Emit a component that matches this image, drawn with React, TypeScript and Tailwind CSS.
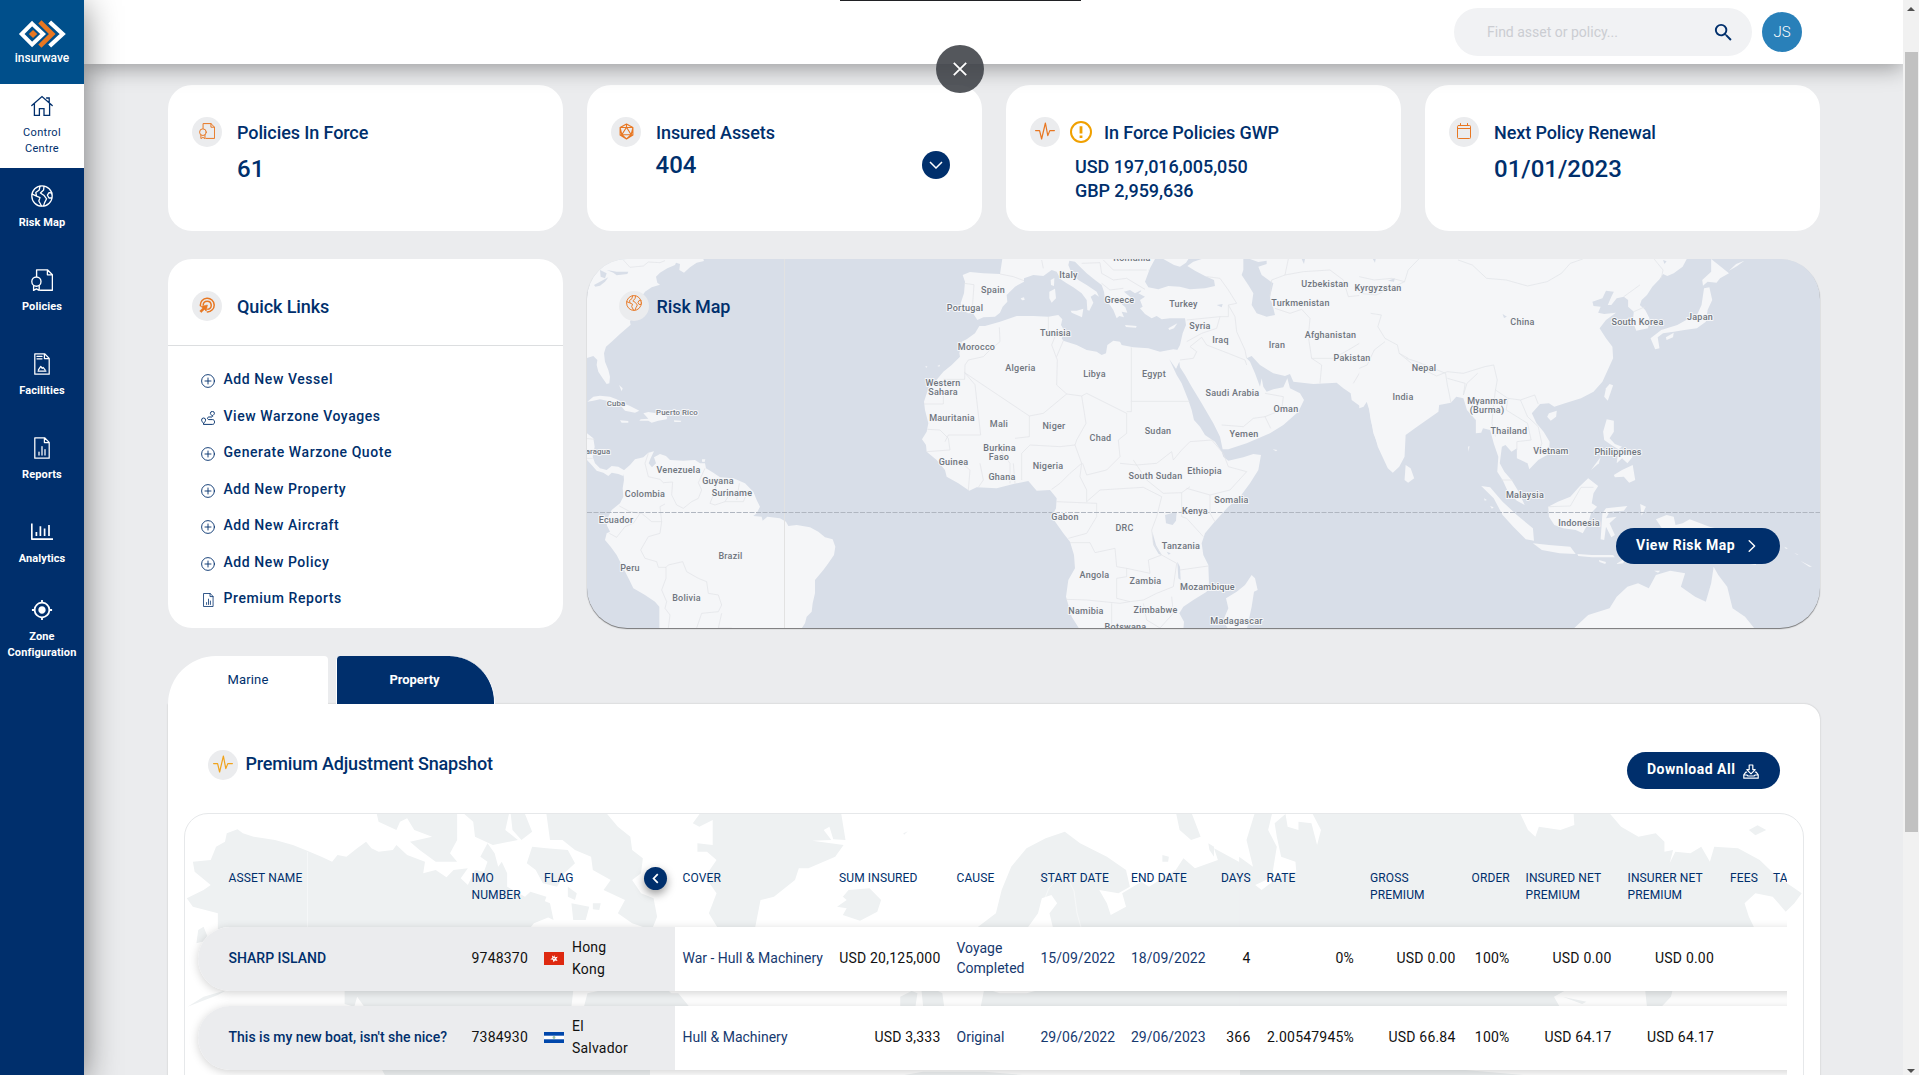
import React from 'react';
import { MdSearch, MdMyLocation } from 'react-icons/md';

type IconProps = { className?: string };

const stroke = {
  fill: 'none',
  stroke: 'currentColor',
  strokeLinecap: 'round' as const,
  strokeLinejoin: 'round' as const,
};

function HomeIcon({ className }: IconProps) {
  return (
    <svg viewBox="0 0 22 22" className={className} {...stroke} strokeWidth={1.3}>
      <path d="M0.8 10.6 11 1.6l10.2 9M3.4 8.6v11.8h5v-6.8h4.6v6.8h5.6V8.6M15.6 3h2.6v4.6" strokeLinejoin="miter" />
    </svg>
  );
}

function GlobeIcon({ className }: IconProps) {
  return (
    <svg viewBox="0 0 22 22" className={className} {...stroke} strokeWidth={1.3}>
      <circle cx="11" cy="11" r="10.2" />
      <path d="M9 1.200 8.200 5 4.800 7.600 5.400 10.400M1.200 9.200 5 10.800 9 12.600 7.800 16l2.600 4.800M13 1.400 12.600 5 9.400 8l3.400 2.200 2.800 3.600-2 3.800-1 3M20.800 8 18 7.600 16.400 10.200 18 13h2.600" />
    </svg>
  );
}

function PolicyIcon({ className }: IconProps) {
  return (
    <svg viewBox="0 0 22 22" className={className} {...stroke} strokeWidth={1.35}>
      <path d="M5.6 7.4V.8h10.8l5 5v15.4h-12M16.4.8v5h5" />
      <circle cx="5.4" cy="12.6" r="4.6" />
      <path d="M2.6 16.6v4.8l2.8-1.6 2.8 1.6v-4.8" />
    </svg>
  );
}

function FacilityIcon({ className }: IconProps) {
  return (
    <svg viewBox="0 0 16 22" className={className} {...stroke} strokeWidth={1.25}>
      <path d="M.8.8h9.8l4.6 4.6v15.8H.8zM10.4.8v4.8h4.8M3 3.4h5M3 5.8h5M4 18h8M4.4 16.8l2.4-3.4 1.4 2 .9-1 2 2.4" />
    </svg>
  );
}

function ReportIcon({ className }: IconProps) {
  return (
    <svg viewBox="0 0 16 22" className={className} {...stroke} strokeWidth={1.25}>
      <path d="M.8.8h9.8l4.6 4.6v15.8H.8zM10.4.8v4.8h4.8M5 18v-3M8 18V9.6M11 18v-5.4" />
    </svg>
  );
}

function AnalyticsIcon({ className }: IconProps) {
  return (
    <svg viewBox="0 0 22 18" className={className} {...stroke} strokeWidth={1.7} strokeLinecap="butt">
      <path d="M.8.6v15.6H22M5.4 13V9M9.4 13V3.2M13.6 13V5.6M18 13V2" />
    </svg>
  );
}

function PulseIcon({ className }: IconProps) {
  return (
    <svg viewBox="0 0 20 18" className={className} {...stroke} strokeWidth={1.2}>
      <path d="M.6 8.6h4l2 8.4L10.4 1l2.4 12.6 2-5h4.6" />
    </svg>
  );
}

function AssetIcon({ className }: IconProps) {
  return (
    <svg viewBox="0 0 16 18" className={className} {...stroke} strokeWidth={1.2}>
      <path d="M8 1l6.8 3.8v8L8 17l-6.8-4.2v-8zM8 4.4l-5 8h10zM8 1v3.4M1.2 4.8 3 12.4M14.8 4.8 13 12.4M3 12.4 8 17l5-4.6M1.2 4.8 8 4.4l6.8.4M1.2 12.8 3 12.4M14.8 12.8 13 12.4" />
    </svg>
  );
}

function CalendarIcon({ className }: IconProps) {
  return (
    <svg viewBox="0 0 14 16" className={className} {...stroke} strokeWidth={1}>
      <rect x=".5" y="2.5" width="13" height="13" rx="1" />
      <path d="M.5 5.5h13M3.5.5v2M10.5.5v2" />
    </svg>
  );
}

function TargetIcon({ className }: IconProps) {
  return (
    <svg viewBox="0 0 16 16" className={className} {...stroke} strokeWidth={1.5}>
      <path d="M1.4 8.6A6.9 6.9 0 1 1 8.4 15M4.2 8A4 4 0 1 1 8.8 12.2" />
      <path d="M2 9.4 8.4 8 7.2 14.2 5.4 12.4 2.2 15.4.8 14 3.8 11z" fill="currentColor" strokeWidth={0.6} />
    </svg>
  );
}

function PlusCircleIcon({ className }: IconProps) {
  return (
    <svg viewBox="0 0 14 14" className={className} {...stroke} strokeWidth={0.9}>
      <circle cx="7" cy="7" r="6.4" />
      <path d="M7 4v6M4 7h6" />
    </svg>
  );
}

function RouteIcon({ className }: IconProps) {
  return (
    <svg viewBox="0 0 14 14" className={className} {...stroke} strokeWidth={0.95}>
      <path d="M2.6 12.4C1.4 11 .6 10 .6 9a2 2 0 0 1 4 0c0 1-.8 2-2 3.4zM11.4 5C10.200 3.600 9.400 3.200 9.400 2.400a2 2 0 0 1 4 0c0 .8-.8 1.400-2 2.600zM10.600 6H8c-2 0-2 2.600 0 2.600h3.600c2.600 0 2.600 4.800 0 4.800H2.600" />
    </svg>
  );
}

function DownloadIcon({ className }: IconProps) {
  return (
    <svg viewBox="0 0 16 15" className={className} {...stroke} strokeWidth={1.2}>
      <path d="M6.200 1h3.600v4.600h2.400L8 9.800 3.800 5.600h2.400zM3.600 8.200H2.800L.8 10.800v3.400h14.400v-3.400l-2-2.600h-.8M.8 11h3l1.200 1h6l1.200-1h3" />
    </svg>
  );
}

function Logo() {
  return (
    <svg viewBox="50 60 148 86" className="h-[28px] w-[49px]" fill="none" strokeWidth="12">
      <path d="M146 66 186 103 146 140" stroke="#fff" strokeWidth="13" />
      <path d="M116 66 154 103 116 140" stroke="#e87722" strokeWidth="14" />
      <path d="M92 71 126 103 92 135 60 103z" stroke="#fff" />
      <path d="M95 91 108 103 95 115 82 103z" fill="#e87722" />
    </svg>
  );
}

const NAV = [
  { label: ['Control', 'Centre'], icon: <HomeIcon className="size-[22px]" />, active: true },
  { label: ['Risk Map'], icon: <GlobeIcon className="size-[22px]" /> },
  { label: ['Policies'], icon: <PolicyIcon className="size-[22px]" /> },
  { label: ['Facilities'], icon: <FacilityIcon className="h-[22px] w-4" /> },
  { label: ['Reports'], icon: <ReportIcon className="h-[22px] w-4" /> },
  { label: ['Analytics'], icon: <AnalyticsIcon className="h-[18px] w-[22px]" /> },
  { label: ['Zone', 'Configuration'], icon: <MdMyLocation className="size-[22px]" /> },
];

function Sidebar() {
  return (
    <nav className="relative z-30 flex w-[84px] shrink-0 flex-col bg-[#002f6c] text-white shadow-[0_6px_34px_rgba(0,0,0,0.5)]">
      <div className="flex h-[84px] flex-col items-center bg-[#004f8b] pt-5">
        <Logo />
        <span className="mt-[2px] text-[12px] leading-4 font-medium">insurwave</span>
      </div>
      {NAV.map((item) => (
        <div
          key={item.label.join(' ')}
          className={`flex h-[84px] flex-col items-center text-center text-[11px] leading-4 ${
            item.label.length > 1 ? 'pt-[11px]' : 'pt-[17px]'
          } ${item.active ? 'bg-white tracking-[0.3px] text-[#002f6c]' : 'font-bold tracking-[0.100px]'}`}
        >
          <div className="flex h-[22px] items-center">{item.icon}</div>
          <div className="mt-2">
            {item.label.map((line) => (
              <div key={line}>{line}</div>
            ))}
          </div>
        </div>
      ))}
    </nav>
  );
}

function Header() {
  return (
    <header className="relative z-10 flex h-16 shrink-0 items-center justify-end bg-white pr-[101px] shadow-[0_4px_22px_rgba(0,0,0,0.36)]">
      <div className="flex h-12 w-[298px] items-center justify-between rounded-full bg-[#f1f2f4] pr-[17px] pl-[33px]">
        <span className="text-[14px] text-[#cbcdd2]">Find asset or policy...</span>
        <MdSearch className="size-[23px] text-[#002f6c]" />
      </div>
      <div className="ml-[10px] flex size-10 items-center justify-center rounded-full bg-[#2980b9] text-[15px] font-light text-white">
        JS
      </div>
      <div className="absolute top-[45px] left-[852px] flex size-12 items-center justify-center rounded-full bg-[#3c4045]/88">
        <svg viewBox="0 0 14 14" className="size-[14px]" stroke="#fff" strokeWidth="1.8">
          <path d="M.8.8l12.400 12.400M13.200.8.8 13.200" />
        </svg>
      </div>
      <div className="absolute top-0 left-[756px] h-px w-[241px] bg-[#202124]" />
    </header>
  );
}

function IconBadge({ children }: { children: React.ReactNode }) {
  return (
    <div className="flex size-[30px] shrink-0 items-center justify-center rounded-full bg-[#ebecee] pb-[2px] text-[#e87722]">
      {children}
    </div>
  );
}

function StatCard({
  icon,
  title,
  warning,
  children,
}: {
  icon: React.ReactNode;
  title: string;
  warning?: boolean;
  children: React.ReactNode;
}) {
  return (
    <section className="h-[146px] rounded-[24px] bg-white px-6 pt-8 text-[#002f6c]">
      <div className="flex h-[30px] items-center">
        <IconBadge>{icon}</IconBadge>
        {warning && (
          <svg viewBox="0 0 24 24" className="ml-[9px] size-6" fill="none" stroke="#f0a000" strokeWidth="2">
            <circle cx="12" cy="12" r="10" />
            <path d="M12 6.200v7.200M12 15.600v2.400" strokeWidth="2.800" />
          </svg>
        )}
        <h2
          className={`pt-[2px] text-[18px] leading-[22px] font-medium tracking-[-0.100px] ${
            warning ? 'ml-[11px]' : 'ml-[15px]'
          }`}
        >
          {title}
        </h2>
      </div>
      {children}
    </section>
  );
}

const LINKS = [
  { label: 'Add New Vessel', icon: 'plus' },
  { label: 'View Warzone Voyages', icon: 'route' },
  { label: 'Generate Warzone Quote', icon: 'plus' },
  { label: 'Add New Property', icon: 'plus' },
  { label: 'Add New Aircraft', icon: 'plus' },
  { label: 'Add New Policy', icon: 'plus' },
  { label: 'Premium Reports', icon: 'report' },
];

function QuickLinks() {
  return (
    <section className="h-[369px] w-[395px] shrink-0 rounded-[24px] bg-white text-[#002f6c]">
      <div className="h-[87px] border-b border-[#dcdee0] px-6 pt-8">
        <div className="flex items-center">
          <IconBadge>
            <TargetIcon className="size-4" />
          </IconBadge>
          <h2 className="ml-[15px] pt-[2px] text-[18px] leading-[22px] font-medium tracking-[-0.100px]">Quick Links</h2>
        </div>
      </div>
      <ul className="pt-[15.300px] pl-[33px]">
        {LINKS.map((l) => (
          <li key={l.label} className="flex h-[36.500px] items-center text-[14px] font-medium tracking-[0.570px]">
            <span className="flex w-[14px] justify-center pt-[3px]">
              {l.icon === 'plus' && <PlusCircleIcon className="size-[14px]" />}
              {l.icon === 'route' && <RouteIcon className="size-[14px]" />}
              {l.icon === 'report' && <ReportIcon className="h-[14px] w-[11px]" />}
            </span>
            <span className="ml-[8.500px]">{l.label}</span>
          </li>
        ))}
      </ul>
    </section>
  );
}

/* Land masses, grouped by the tile they belong to. */
const AMERICAS = [
  'M15 27 370 27 372 33 350 38 330 52 312 68 298 60 300 42 288 38 285 45 262 55 240 68 228 80 232 98 240 104 215 112 195 125 178 150 165 165 163 180 150 215 152 224 120 252 95 275 78 290 72 310 75 335 85 360 90 380 88 400 80 402 68 385 55 365 50 345 52 330 40 318 15 326z',
  'M22 455 40 440 60 437 90 440 110 448 135 462 150 468 178 482 165 488 135 482 125 470 95 455 60 448 40 452z',
  'M190 490 205 486 230 490 262 500 260 508 235 512 215 518 205 512 178 512 182 508 205 506z',
  'M120 511 145 513 145 518 125 518z',
  'M282 511 304 512 302 516 283 516z',
  'M117 405 128 415 125 424z',
  'M15 545 40 565 44 590 38 620 45 640 60 655 80 660 95 648 115 650 135 662 130 678 115 672 95 668 85 678 70 668 50 662 35 645 15 624z',
  'M130 662 150 645 165 628 190 622 205 608 222 604 212 625 206 640 216 652 228 640 222 622 240 612 258 618 270 630 310 632 345 630 360 640 375 640 378 655 400 668 420 682 460 685 495 700 520 725 530 750 540 770 530 790 520 798 545 800 548 812 562 800 600 805 618 815 625 828 650 825 690 832 715 845 735 862 758 868 766 890 762 915 745 940 730 960 705 990 705 1030 698 1060 695 1085 680 1100 675 1120 662 1140 238 1140 238 1070 225 1055 195 1035 160 1015 148 990 130 955 110 915 92 890 75 870 80 850 90 845 80 825 85 800 95 780 120 760 130 740 128 715 132 690z',
  'M366 628 376 628 374 636 366 635z',
];
const AMERICAS_WATER = ['M42 105 60 95 85 82 75 95 60 107 46 110z', 'M80 60 110 65 145 65 142 72 110 76 100 68z', 'M60 60 80 70 75 85 62 80z'];
const AMERICAS_BORDERS =
  'M130 30 150 52 190 48 205 36 240 38 255 32 M205 610 195 640 205 680 240 688 250 698 278 696 275 735 290 765 310 775 335 755 355 745 365 720 355 698 375 655 M415 685 400 735 390 760 405 765 435 755 450 730 M478 700 470 750 M505 720 490 755 435 755 M118 768 150 785 185 790 215 815 245 815 240 770 255 762 M245 815 240 850 205 860 182 900 195 925 230 935 235 952 258 952 265 945 308 935 320 965 355 985 380 995 385 1030 415 1035 425 1065 415 1085 365 1090 350 1134 M258 952 258 985 245 1020 260 1055 255 1075 270 1095 265 1134 M425 1090 415 1134 455 1134 M88 850 110 862 135 830 160 820 180 790 M15 565 44 568 M15 625 38 625';

const AFRICA_EUROPE = [
  'M308 20 300 72 250 70 210 66 188 75 195 95 192 130 182 160 185 180 205 190 218 188 232 210 250 202 285 200 300 188 308 170 322 155 320 135 345 110 372 95 372 85 400 75 430 78 455 60 470 65 482 88 500 100 520 112 545 130 560 150 562 180 568 182 580 158 572 140 585 132 597 140 590 125 560 105 535 90 515 70 505 45 508 32 525 35 540 50 560 70 585 90 605 105 612 125 615 150 630 165 640 180 650 205 658 198 672 202 665 185 682 188 676 172 662 160 700 150 690 140 672 125 690 120 705 130 720 122 735 118 748 90 745 60 760 45 765 20z',
  'M512 182 530 182 550 176 546 202 515 188z',
  'M448 125 465 116 468 145 455 158 448 145z',
  'M452 90 463 84 462 108 453 105z',
  'M362 145 372 142 374 150 366 151z',
  'M675 225 710 228 708 233 678 231z',
  'M805 235 832 220 822 235 808 240z',
  'M835 300 820 298 780 305 745 295 700 292 665 285 660 275 640 272 622 285 618 310 605 315 590 305 560 300 530 285 490 272 485 265 495 245 483 225 487 208 475 195 445 200 400 198 350 198 300 215 255 228 238 228 225 250 200 268 185 275 178 310 180 320 155 345 130 365 105 395 85 415 72 455 75 480 85 520 80 545 66 568 78 585 80 605 110 630 135 660 140 680 175 700 208 722 230 712 290 715 340 702 385 693 410 722 450 720 458 730 470 745 468 775 455 800 490 850 510 875 522 915 525 955 505 990 498 1040 515 1100 540 1140 850 1140 852 1115 838 1090 850 1070 880 1050 920 1025 927 1000 925 945 910 915 905 880 915 850 940 820 985 770 1020 740 1050 700 1075 660 1083 615 1060 612 1030 622 985 632 970 620 965 605 945 575 915 555 900 530 882 510 875 480 865 450 845 400 830 375 808 328 828 356 838 330z',
  'M1055 975 1065 985 1073 1020 1062 1025 1055 1070 1040 1140 985 1140 970 1110 985 1075 978 1045 1010 1025 1035 1005z',
  'M722 125 715 130 735 140 720 150 728 170 720 175 735 192 755 205 770 198 785 208 810 205 855 205 858 225 848 250 840 285 832 300 828 356 838 335 840 352 855 375 875 410 905 460 940 520 960 560 968 598 985 598 1040 580 1110 550 1150 525 1195 485 1212 450 1200 430 1170 415 1162 385 1150 412 1120 418 1100 425 1090 410 1085 385 1080 410 1065 370 1050 335 1040 325 1055 318 1080 345 1120 370 1155 378 1170 372 1180 395 1240 402 1310 398 1330 415 1352 430 1355 450 1385 472 1400 455 1408 480 1420 550 1442 605 1442 20 760 20z',
  'M1118 598 1132 600 1128 604z',
  'M75 350 82 348 80 353z',
  'M112 348 120 344 118 350z',
];
const AFRICA_WATER = [
  'M750 55 765 27 790 27 822 45 840 50 858 38 870 20 905 27 880 35 862 48 885 62 915 78 942 90 945 108 915 115 870 118 840 110 805 108 775 118 745 112 735 95z',
  'M1030 20 1030 60 1025 75 1045 105 1060 130 1055 165 1070 190 1100 200 1125 195 1120 175 1110 140 1120 100 1085 75 1075 50 1100 42 1100 32 1075 36z',
  'M795 795 830 785 828 812 818 825 798 820z',
  'M757 845 768 885 785 915 776 912 760 885z',
  'M832 935 840 950 842 990 835 985z',
  'M950 165 968 162 965 172z',
  'M1205 27 1215 27 1212 42z',
  'M800 905 812 910 806 914z',
];
const AFRICA_BORDERS =
  'M192 100 222 104 218 160 212 185 M372 72 M300 72 340 80 372 92 M425 30 430 55 M545 40 600 38 605 70 640 90 680 85 735 118 M610 30 640 60 690 60 740 60 M605 100 630 120 670 115 M920 80 960 85 985 120 1010 160 985 165 985 200 960 200 860 210 M985 165 1005 200 1010 245 1035 300 1040 325 M860 275 905 250 950 235 960 200 M905 262 920 285 985 310 1035 330 1040 345 M840 330 880 325 890 305 870 290 905 262 M1125 175 1170 190 1205 178 1230 205 1225 260 1235 325 1265 345 1260 400 M1110 140 1115 90 1155 75 1165 27 M1155 75 1210 65 1290 60 1330 90 1345 140 1440 130 M1235 325 1300 325 1345 300 1395 270 1400 220 1440 205 M1360 400 1390 350 1410 330 1420 290 M965 525 1030 530 1060 505 1095 500 1145 480 1150 440 1095 430 M1095 500 1112 535 M298 232 300 275 270 300 250 320 205 330 195 345 194 388 130 388 M194 368 388 498 388 560 345 565 M194 368 225 404 242 555 145 555 135 575 M388 498 430 490 500 432 470 405 472 330 455 285 465 260 445 240 445 200 M500 432 545 438 560 430 680 490 680 550 655 570 660 620 620 660 560 675 548 640 M545 438 558 520 530 570 525 585 480 590 390 585 365 610 365 690 M490 272 470 320 M694 292 694 454 870 454 M694 454 694 485 680 485 M72 462 130 462 130 430 M82 538 120 540 145 565 150 600 80 605 M525 585 545 640 510 670 480 700 455 718 M545 640 540 680 560 720 560 755 M660 640 710 645 770 640 815 605 820 630 845 600 870 575 M700 630 740 690 790 730 845 728 870 710 M870 575 935 570 970 610 985 650 1040 665 990 720 930 735 860 715 M930 735 930 790 945 815 M845 728 845 800 860 805 910 860 M560 755 600 720 680 715 730 712 785 740 770 800 755 840 760 880 785 915 M470 755 590 760 590 800 560 850 505 865 M510 878 570 878 585 908 645 895 650 950 680 955 680 980 650 985 650 1045 690 1055 730 1050 770 1030 820 1010 830 940 785 915 745 930 750 970 680 955 M498 1048 560 1050 660 1060 690 1055 M635 1060 635 1134 M730 1060 740 1110 780 1134 820 1090 815 1040 M840 960 925 948 M145 630 180 635 210 660 205 720 M240 640 250 690 235 712 M340 640 345 700 M300 600 330 640 330 700';

const EAST_ASIA = [
  'M-2 20 920 20 905 50 880 70 862 78 850 72 840 88 820 110 805 135 790 150 785 165 800 180 812 205 808 235 775 242 765 215 768 185 752 170 752 150 740 140 720 145 705 165 695 165 705 140 712 125 690 122 680 145 652 155 655 168 675 170 668 188 685 192 718 188 690 210 672 235 690 265 708 290 710 325 695 360 680 395 655 425 620 445 575 460 545 470 530 460 505 462 482 490 495 520 515 545 532 575 530 612 500 630 475 658 470 640 440 625 440 595 425 605 408 585 398 590 392 640 405 665 425 690 445 725 462 765 440 752 415 725 400 690 385 665 388 620 375 580 365 540 345 535 340 548 325 550 325 510 300 480 290 445 270 440 255 458 222 465 220 485 160 530 128 555 125 620 110 650 92 668 78 655 50 590 30 510 22 450 10 470-2 475z',
  'M128 645 142 655 152 685 135 698 125 690z',
  'M530 490 552 482 550 500 535 512 525 500z',
  'M700 402 710 406 695 452 685 440 690 415z',
  'M692 508 712 512 712 545 700 565 715 582 735 590 725 598 705 585 685 570 682 545z',
  'M725 600 745 605 765 620 750 640 735 625 720 640z',
  'M712 675 735 660 765 645 772 690 755 698 740 680 715 682z',
  'M675 622 670 640 648 660 665 635z',
  'M528 770 555 755 590 740 615 710 640 685 668 708 655 730 650 760 665 770 648 790 640 820 625 850 605 840 570 835 545 825 530 800z',
  'M340 708 365 712 400 755 440 795 485 835 488 872 465 868 430 830 400 795 375 745z',
  'M485 880 530 885 590 890 605 912 560 910 510 900z',
  'M610 912 650 915 710 915 715 922 650 922 612 918z',
  'M670 930 690 936 688 942 672 936z',
  'M718 942 745 925 738 940z',
  'M680 790 690 775 750 768 740 782 700 785 690 805 720 800 700 820 715 855 705 862 690 830 685 870 675 868 678 820z',
  'M786 762 802 770 790 797z',
  'M830 808 860 795 880 800 885 825 905 820 925 808 980 830 1060 850 1130 900 1110 945 1060 935 1000 930 900 880 850 840z',
  'M595 1140 640 1095 700 1075 720 1040 750 1010 780 1000 810 1015 830 975 870 962 912 970 900 1010 940 1040 970 1055 985 1000 992 950 1005 975 1030 1010 1045 1075 1080 1100 1110 1140z',
  'M965 115 980 112 988 150 975 180 970 215 945 235 910 240 880 245 850 250 835 262 840 295 828 298 815 265 845 240 890 225 915 210 945 195 958 165z',
  'M985 27 1035 70 1010 85 1000 98 975 95 962 107 960 90 985 65z',
  'M858 262 880 248 878 262 860 270z',
  'M1035 62 1055 42 1078 32 1058 48z',
  'M1190 890 1200 895 1195 897z',
  'M1218 908 1230 914 1226 914z',
  'M1235 932 1268 950 1260 950z',
  'M825 962 842 962 836 968z',
  'M303 590 307 588 305 605z',
  'M348 745 356 750 350 752z',
  'M365 768 375 772 370 776z',
];
const ASIA_WATER = ['M78 92 98 85 95 95z', 'M400 192 412 200 404 204z', 'M850 30 860 34 854 42z', 'M36 27 44 27 42 38z'];
const ASIA_BORDERS =
  'M275 30 315 45 355 85 410 90 470 108 525 95 565 70 590 40 625 27 M825 27 850 60 845 85 M740 140 785 105 M768 185 800 170 M-2 130 45 135 125 95 135 60 165 27 M-2 80 40 90 90 85 125 95 M30 190 60 195 50 230 70 265 105 285 110 310 150 345 215 378 245 365 290 370 350 350 375 345 385 390 380 420 415 445 450 450 490 435 500 462 M110 310 135 325 M40 300 70 275 M-2 355 20 345 40 300 M130 325 160 335 240 370 245 405 250 430 255 458 M245 385 295 400 290 435 M290 435 300 400 330 370 M380 420 375 460 370 520 380 560 M415 445 410 480 440 500 470 520 480 570 440 575 440 600 M450 450 470 500 500 530 510 580 500 610 M530 770 590 768 605 740 620 712 655 712 M395 690 430 690';

const LABELS: [string, number, number][] = [
  ['Cuba', 29, 147], ['Puerto Rico', 90, 155.500], ['aragua', 11, 194.500], ['Venezuela', 91.500, 214], ['Guyana', 131, 224.500],
  ['Suriname', 145, 236.500], ['Colombia', 58, 238], ['Ecuador', 29, 264], ['Brazil', 143.500, 299.500], ['Peru', 43, 311.500],
  ['Bolivia', 99.500, 342], ['Spain', 406, 33.500], ['Portugal', 378, 52], ['Italy', 481.500, 19], ['Romania', 545, 2],
  ['Greece', 532.500, 44], ['Turkey', 596.500, 47.500], ['Syria', 613, 70], ['Iraq', 633.500, 83.500], ['Iran', 690, 89],
  ['Uzbekistan', 738, 28], ['Kyrgyzstan', 791, 31.500], ['Turkmenistan', 713.500, 47], ['Afghanistan', 743.500, 79],
  ['Pakistan', 765, 101.500], ['Tunisia', 468.500, 77], ['Morocco', 389.500, 90.500], ['Algeria', 433.500, 112],
  ['Libya', 507.500, 118], ['Egypt', 567, 118], ['Western', 356, 126.500], ['Sahara', 356, 136], ['Saudi Arabia', 645.500, 136.500],
  ['Oman', 699, 153], ['Yemen', 657, 177.500], ['Mauritania', 365, 161.500], ['Mali', 412, 167.500], ['Niger', 467, 169.500],
  ['Sudan', 571, 175], ['Chad', 513.500, 182], ['Burkina', 412.500, 191.500], ['Faso', 412, 201], ['Guinea', 366.500, 205.500],
  ['Nigeria', 461, 210], ['Ghana', 415, 221], ['South Sudan', 568.500, 220], ['Ethiopia', 617.500, 214.500],
  ['Somalia', 644.500, 243.500], ['Kenya', 608, 255], ['Gabon', 478, 261], ['DRC', 537.500, 271.500], ['Tanzania', 594, 289.500],
  ['Angola', 507.500, 319], ['Zambia', 558.500, 325], ['Mozambique', 620.500, 330.500], ['Namibia', 499, 355],
  ['Zimbabwe', 568.500, 353.500], ['Madagascar', 649.500, 364.500], ['Botswana', 538.500, 370.500], ['China', 935.500, 66],
  ['South Korea', 1050.500, 66], ['Japan', 1113, 61], ['Nepal', 837, 111.500], ['India', 816, 140.500], ['Myanmar', 900, 144.500],
  ['(Burma)', 900, 153.500], ['Thailand', 922, 175], ['Vietnam', 964, 195], ['Philippines', 1031, 195.500],
  ['Malaysia', 938, 238.500], ['Indonesia', 992, 267],
];
const SMALL_LABELS = ['Cuba', 'Puerto Rico', 'aragua'];

function Tile({ transform, land, water, borders }: { transform: string; land: string[]; water: string[]; borders: string }) {
  return (
    <g transform={transform}>
      {land.map((d) => (
        <path key={d} d={d} fill="#f5f6f8" />
      ))}
      {water.map((d) => (
        <path key={d} d={d} fill="#d8dee8" />
      ))}
      <path d={borders} fill="none" stroke="#e2e4e8" strokeWidth="2.200" strokeLinejoin="round" />
    </g>
  );
}

function RiskMap() {
  return (
    <section className="relative h-[369px] flex-1 overflow-hidden rounded-[40px] bg-[#d8dee8] shadow-[0_1px_1px_rgba(0,0,0,0.5)]">
      <svg className="absolute inset-0" width="1233" height="369" viewBox="0 0 1233 369">
        <Tile transform="translate(-7 -9) scale(.33333)" land={AMERICAS} water={AMERICAS_WATER} borders={AMERICAS_BORDERS} />
        <Tile transform="translate(313 -9) scale(.33333)" land={AFRICA_EUROPE} water={AFRICA_WATER} borders={AFRICA_BORDERS} />
        <Tile transform="translate(773 -9) scale(.35651 .33333)" land={EAST_ASIA} water={ASIA_WATER} borders={ASIA_BORDERS} />
        <path d="M197.500 0v369" stroke="#e2e2e2" strokeWidth="1" />
        <path d="M0 253.500h1233" stroke="#b0b6c0" strokeWidth="1" strokeDasharray="5 1.500" />
        <g
          fontFamily="Roboto"
          fontSize="9"
          fontWeight="500"
          letterSpacing=".25"
          fill="#6f757e"
          stroke="#f5f6f8"
          strokeWidth="2"
          strokeLinejoin="round"
          textAnchor="middle"
          paintOrder="stroke"
        >
          {LABELS.map(([name, x, y]) => (
            <text
              key={name}
              x={x}
              y={y}
              fontSize={SMALL_LABELS.includes(name) ? 7.800 : 9}
              letterSpacing={SMALL_LABELS.includes(name) ? 0.100 : 0.250}
            >
              {name}
            </text>
          ))}
        </g>
      </svg>
      <div className="relative flex h-full flex-col justify-between">
        <div className="flex items-center pt-8 pl-8">
          <div className="flex size-[30px] items-center justify-center rounded-full bg-[#ebecee] pb-[6px] text-[#e87722]">
            <GlobeIcon className="size-4" />
          </div>
          <h2 className="ml-[7.500px] pt-[2px] text-[18px] leading-[22px] font-medium tracking-[-0.100px] text-[#002f6c]">
            Risk Map
          </h2>
        </div>
        <button className="mr-[40px] mb-[64px] flex h-9 w-[164px] items-center self-end rounded-full bg-[#002f6c] pb-[2px] pl-[20px] text-[14px] font-bold tracking-[0.500px] text-white">
          View Risk Map
          <svg viewBox="0 0 8 12" className="mt-[2px] ml-[13px] h-3 w-2" {...stroke} strokeWidth={1.400}>
            <path d="M1.200.8 6.600 6l-5.400 5.200" />
          </svg>
        </button>
      </div>
    </section>
  );
}

const BG_WEST =
  'M245 568 260 580 290 590 350 600 400 615 440 632 480 650 510 665 525 645 550 650 580 625 605 605 620 625 640 635 680 630 690 615 720 645 770 665 765 700 800 690 830 712 850 690 890 685 870 715 890 735 910 690 935 695 945 665 925 650 945 610 965 640 975 680 985 665 1000 700 1000 740 1050 770 1065 755 1110 770 1100 800 1120 830 1075 850 1060 870 190 870 190 820 120 800 103 775 150 750 170 735 125 695 120 665 170 660 185 620 210 605 215 580z M635 522 860 522 860 600 840 640 860 665 800 665 755 630 728 605 790 590 740 570 720 535 700 545 690 570 640 545z M880 522 1005 522 995 570 1030 600 960 615 910 590 905 545z M1010 522 1050 522 1070 575 1040 600 1015 570z M1110 522 1280 522 1310 560 1345 590 1350 630 1380 655 1375 700 1350 720 1375 760 1410 775 1420 830 1405 870 1350 850 1310 820 1330 780 1270 750 1290 720 1240 690 1235 650 1190 630 1155 600 1120 600z M1070 620 1110 625 1170 630 1190 670 1160 700 1140 740 1100 730 1080 690 1055 670z M1075 770 1120 790 1130 840 1090 820z M1170 740 1195 760 1190 780 1170 770z M1180 790 1230 800 1220 840 1185 840z M1240 790 1262 790 1258 810 1240 808z M545 1053 1185 1053 1180 1100 600 1100 580 1070 572 1100 545 1092z M1225 1060 1290 1045 1450 1050 1500 1100 1215 1100z M105 1100 150 1070 215 1050 190 1065z M650 1290 1400 1290 1400 1310 660 1310z M135 870 150 860 165 900 130 910z';
const BG_MID =
  'M160 95 525 95 537 180 505 178 495 140 480 150 500 180 450 182 532 195 510 230 440 265 415 265 405 300 350 350 315 360 300 448 205 448 180 400 200 340 170 290 200 240 175 215 150 215 150 190 190 195 190 120 155 140 138 130z M510 330 530 350 545 330 600 325 630 360 620 395 575 422 530 405 540 385 515 380 540 360z M875 448 930 400 945 330 970 260 1010 205 1060 175 1110 155 1150 190 1220 230 1270 270 1280 320 1250 340 1200 330 1220 370 1230 405 1270 380 1260 340 1310 305 1330 320 1400 270 1420 235 1450 265 1510 240 1500 205 1572 250 1572 448 1080 448 1070 400 1090 370 1075 345 1050 355 1040 400 1010 448z M1400 95 1440 95 1465 170 1440 180 1410 150z M1485 190 1500 200 1500 230 1488 210z M1365 225 1382 230 1380 245 1365 245z M688 160 700 154 690 164z M680 650 710 633 725 640 720 678 680 678z M735 625 765 625 790 640 795 682 740 682z M890 682 900 625 940 640 1010 640 1060 625 1572 625 1572 682z M690 885 740 875 900 875 1000 885z M30 640 100 640 130 682 80 670z';
const BG_EAST =
  'M35 245 75 245 65 300 85 350 75 430 60 450 35 465 50 480 75 455 90 432 130 425 128 395 95 380 85 320 80 280 105 252 110 290 135 300 135 275 165 280 178 345 187 300 165 245 645 245 665 300 682 320 690 290 740 300 772 285 770 245 850 245 880 290 920 320 960 310 980 335 980 365 1000 360 992 400 1005 365 1040 370 1065 350 1085 395 1095 350 1150 355 1200 390 1240 440 1275 470 1297 490 1280 520 1260 545 1230 500 1190 490 1165 520 1175 560 1190 600-2 600-2 380 30 410 15 330z M1175 300 1195 286 1215 300 1190 316z M-2 775 760 775 725 800 740 835-2 835z M745 800 800 815 790 822z M935 775 1000 775 995 800 970 835 940 835z M0 1020 520 1020 700 1040 0 1040z';

function TableBackdrop() {
  return (
    <svg className="absolute inset-0" width="1617" height="270" viewBox="0 0 1617 270" fill="#eef1f2">
      <path transform="translate(-35 -174) scale(.35714 .33333)" d={BG_WEST} />
      <path transform="translate(455 -34) scale(.38270 .33333)" d={BG_MID} />
      <path transform="translate(1055 -84) scale(.43310 .33333)" d={BG_EAST} />
      <path d="M122.500 38v79" stroke="#f5f7f8" />
      <path d="M897 117l-5-18-3-22-5-10-10-3-10 10-8 20M880 67l4-10" fill="none" stroke="#fff" strokeWidth=".5" />
    </svg>
  );
}

const FROZEN_HEAD = [
  { label: 'ASSET NAME', w: 'w-[243px]' },
  { label: 'IMO NUMBER', w: 'w-[72.500px] pr-3' },
  { label: 'FLAG', w: 'w-[131px]' },
];

const COLS = [
  { label: 'COVER', w: 'w-[156.500px]', body: 'text-[#16396f]' },
  { label: 'SUM INSURED', w: 'w-[117.500px]', body: 'text-right tracking-[0.200px]' },
  { label: 'CAUSE', w: 'w-[84px]', body: 'text-[#16396f]' },
  { label: 'START DATE', w: 'w-[90.500px]', body: 'text-[#16396f]' },
  { label: 'END DATE', w: 'w-[90px]', body: 'text-[#16396f]' },
  { label: 'DAYS', w: 'w-[45.500px]', body: 'text-right tracking-[0.200px]' },
  { label: 'RATE', w: 'w-[103.500px]', body: 'text-right tracking-[0.200px]' },
  { label: 'GROSS PREMIUM', w: 'w-[101.500px]', body: 'text-right tracking-[0.200px]' },
  { label: 'ORDER', w: 'w-[54px]', body: 'text-right tracking-[0.200px]' },
  { label: 'INSURED NET PREMIUM', w: 'w-[102px]', body: 'text-right tracking-[0.200px]' },
  { label: 'INSURER NET PREMIUM', w: 'w-[102.500px]', body: 'text-right tracking-[0.200px]' },
  { label: 'FEES', w: 'w-[43px]', body: 'text-right' },
  { label: 'TAX', w: 'w-[60px]', body: 'text-right' },
];

function HongKongFlag() {
  return (
    <svg viewBox="0 0 20 14" className="h-[13px] w-5" preserveAspectRatio="none">
      <rect width="20" height="14" fill="#de2910" />
      <path d="M10 3l1 2.600 2.800-.4-1.600 2.200 1.400 2.400-2.600-.6L9.600 11l-.8-2.600-2.600-.6 2.200-1.400L8 3.800l2 1.400z" fill="#fff" />
      <circle cx="10" cy="7" r=".7" fill="#de2910" />
    </svg>
  );
}

function SalvadorFlag() {
  return (
    <svg viewBox="0 0 20 11" className="h-[11px] w-5">
      <rect width="20" height="11" fill="#fff" />
      <rect width="20" height="3.700" fill="#0047ab" />
      <rect y="7.300" width="20" height="3.700" fill="#0047ab" />
      <circle cx="10" cy="5.500" r="1.400" fill="#9dc3a6" />
    </svg>
  );
}

const ROWS = [
  {
    name: 'SHARP ISLAND',
    imo: '9748370',
    flag: <HongKongFlag />,
    country: ['Hong', 'Kong'],
    cells: ['War - Hull & Machinery', 'USD 20,125,000', 'Voyage Completed', '15/09/2022', '18/09/2022', '4', '0%', 'USD 0.00', '100%', 'USD 0.00', 'USD 0.00', '', ''],
  },
  {
    name: "This is my new boat, isn't she nice?",
    imo: '7384930',
    flag: <SalvadorFlag />,
    country: ['El', 'Salvador'],
    cells: ['Hull & Machinery', 'USD 3,333', 'Original', '29/06/2022', '29/06/2023', '366', '2.00547945%', 'USD 66.84', '100%', 'USD 64.17', 'USD 64.17', '', ''],
  },
];

function PremiumTable() {
  return (
    <div className="relative ml-4 h-[280px] w-[1620px] overflow-hidden rounded-t-[24px] border border-[#e6e8ea]">
      <TableBackdrop />
      <div className="relative h-full w-[1602px] overflow-hidden pl-[12.500px]">
        <div className="flex h-[113px] w-[1700px] pt-14 text-[12px] leading-[17px] tracking-[0.120px] text-[#002f6c]">
          <div className="relative flex w-[477.500px] shrink-0 pl-[31px]">
            {FROZEN_HEAD.map((c) => (
              <div key={c.label} className={`shrink-0 ${c.w}`}>
                {c.label}
              </div>
            ))}
            <button className="absolute top-[-3px] left-[446.500px] flex size-[23px] items-center justify-center rounded-full bg-[#002f6c] shadow-[0_4px_10px_rgba(0,0,0,0.400)]">
              <svg viewBox="0 0 8 12" className="h-[11px] w-[7px]" fill="none" stroke="#fff" strokeWidth="2">
                <path d="M6.600 1 1.800 6l4.800 5" />
              </svg>
            </button>
          </div>
          <div className="flex shrink-0 pl-[7.500px]">
            {COLS.map((c) => (
              <div key={c.label} className={`shrink-0 pr-3 ${c.w}`}>
                {c.label}
              </div>
            ))}
          </div>
        </div>
        <div className="flex flex-col gap-[15px]">
          {ROWS.map((row) => (
            <div
              key={row.imo}
              className="flex h-16 w-[1700px] items-center rounded-l-full bg-white text-[14px] leading-5 text-[#111] shadow-[0_2px_10px_rgba(0,0,0,0.180)]"
            >
              <div className="flex h-full w-[477.500px] shrink-0 items-center rounded-l-full bg-[#ebecee] pb-[2px] pl-[31px]">
                <div className="w-[243px] shrink-0 font-medium text-[#002f6c]">{row.name}</div>
                <div className="w-[72.500px] shrink-0 tracking-[0.200px]">{row.imo}</div>
                <div className="flex w-[131px] shrink-0 items-center">
                  {row.flag}
                  <div className="ml-2 leading-[22px] tracking-[0.200px]">
                    {row.country.map((part) => (
                      <div key={part}>{part}</div>
                    ))}
                  </div>
                </div>
              </div>
              <div className="flex h-full shrink-0 items-center pb-[2px] pl-[7.500px]">
                {row.cells.map((cell, i) => (
                  <div key={COLS[i].label} className={`shrink-0 pr-4 ${COLS[i].w} ${COLS[i].body}`}>
                    {cell}
                  </div>
                ))}
              </div>
            </div>
          ))}
        </div>
      </div>
    </div>
  );
}

function SnapshotPanel() {
  return (
    <section className="mt-7">
      <div className="flex h-12 text-[13px] leading-4 text-[#002f6c]">
        <button className="w-[160px] rounded-tl-[48px] rounded-tr-[4px] bg-white tracking-[0.150px]">Marine</button>
        <button className="ml-2 w-[159px] rounded-tl-[4px] rounded-tr-[46px] border-x border-white bg-[#002f6c] pr-[2px] font-bold tracking-[-0.100px] text-white">
          Property
        </button>
      </div>
      <div className="h-[380px] rounded-tr-[16px] bg-white shadow-[0_0_2px_rgba(0,0,0,0.200)]">
        <div className="flex h-[109px] items-start justify-between pt-[46px] pr-[40px] pl-[40px]">
          <div className="flex items-center text-[#002f6c]">
            <div className="flex size-[30px] items-center justify-center rounded-full bg-[#ebecee] pb-[2px] text-[#f0a31c]">
              <PulseIcon className="h-[18px] w-5" />
            </div>
            <h2 className="ml-[7.500px] pb-[2px] text-[18px] leading-[22px] font-medium tracking-[-0.160px]">
              Premium Adjustment Snapshot
            </h2>
          </div>
          <button className="mt-[2px] flex h-[37px] w-[153px] items-center rounded-full bg-[#002f6c] pb-[2px] pl-5 text-[14px] font-bold tracking-[0.500px] text-white">
            Download All
            <DownloadIcon className="mt-1 ml-2 h-[15px] w-4" />
          </button>
        </div>
        <PremiumTable />
      </div>
    </section>
  );
}

function Scrollbar() {
  return (
    <div className="relative z-20 flex w-4 shrink-0 flex-col items-center justify-between bg-[#f1f1f1] py-[4px]">
      <div className="mt-[3px] h-0 w-0 border-x-[4px] border-b-[4px] border-x-transparent border-b-[#505050]" />
      <div className="absolute top-[52px] left-[2px] h-[780px] w-[13px] bg-[#c1c1c1]" />
      <div className="mb-[-2px] h-0 w-0 border-x-[4px] border-t-[4px] border-x-transparent border-t-[#505050]" />
    </div>
  );
}

export default function App() {
  return (
    <div className="flex h-[1075px] w-[1919px] overflow-hidden bg-[#ebecee] font-['Roboto',sans-serif]">
      <Sidebar />
      <div className="flex w-[1819px] shrink-0 flex-col overflow-hidden">
        <Header />
        <main className="w-[1736px] pt-[21px] pl-[84px]">
          <div className="grid grid-cols-4 gap-6">
            <StatCard icon={<PolicyIcon className="size-4" />} title="Policies In Force">
              <p className="mt-2 ml-[45px] text-[24px] leading-7 font-medium">61</p>
            </StatCard>
            <StatCard icon={<AssetIcon className="h-[17px] w-[15px]" />} title="Insured Assets">
              <div className="mt-1 ml-[44.500px] flex items-center justify-between pr-2">
                <p className="text-[24px] leading-7 font-medium">404</p>
                <button className="flex size-7 items-center justify-center rounded-full bg-[#002f6c]">
                  <svg viewBox="0 0 14 8" className="h-2 w-[14px]" fill="none" stroke="#fff" strokeWidth="1.500">
                    <path d="M1 1l6 6 6-6" />
                  </svg>
                </button>
              </div>
            </StatCard>
            <StatCard icon={<PulseIcon className="h-[18px] w-5" />} title="In Force Policies GWP" warning>
              <div className="mt-2 ml-[45px] text-[18px] leading-6 font-medium tracking-[-0.060px]">
                <p>USD 197,016,005,050</p>
                <p>GBP 2,959,636</p>
              </div>
            </StatCard>
            <StatCard icon={<CalendarIcon className="h-4 w-[14px]" />} title="Next Policy Renewal">
              <p className="mt-2 ml-[45px] text-[24px] leading-7 font-medium">01/01/2023</p>
            </StatCard>
          </div>
          <div className="mt-7 flex gap-6">
            <QuickLinks />
            <RiskMap />
          </div>
          <SnapshotPanel />
        </main>
      </div>
      <Scrollbar />
    </div>
  );
}
